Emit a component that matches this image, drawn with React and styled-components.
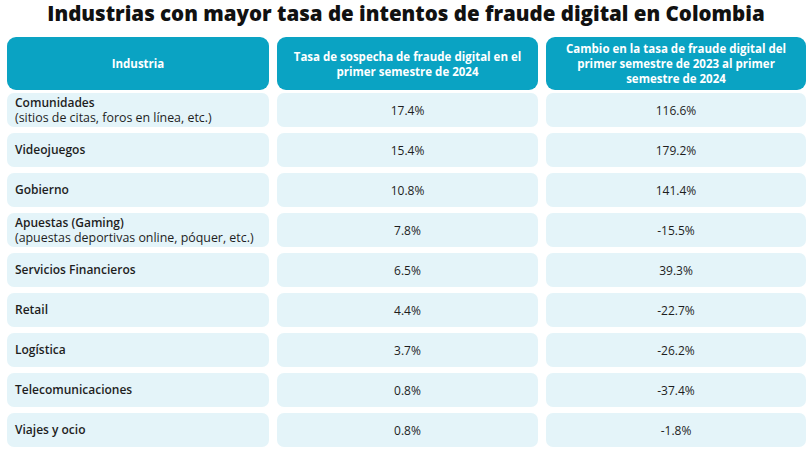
import { Fragment } from 'react'
import styled, { createGlobalStyle } from 'styled-components'

const GlobalStyle = createGlobalStyle`
  html, body {
    margin: 0;
    padding: 0;
    background: #ffffff;
  }
  body {
    font-family: 'Open Sans', 'Noto Sans', sans-serif;
    color: #1e1e1e;
  }
`

const Page = styled.div`
  width: 807px;
  height: 462px;
  box-sizing: border-box;
  padding: 0 2px 0 7px;
  overflow: hidden;
`

const Title = styled.h1`
  margin: 0;
  height: 28px;
  font-family: 'Open Sans', sans-serif;
  font-size: 20.5px;
  font-weight: 800;
  line-height: 26px;
  text-align: center;
  color: #111111;
`

const Columns = styled.div`
  display: grid;
  grid-template-columns: 262px 261px 260px;
  column-gap: 8px;
`

const HeadRow = styled(Columns)`
  margin-top: 9px;
  height: 53px;
`

const Body = styled(Columns)`
  margin-top: 3px;
  row-gap: 6px;
  grid-auto-rows: 34px;
`

const HeadCell = styled.div`
  background: #0aa3c3;
  border-radius: 9px;
  display: flex;
  align-items: center;
  justify-content: center;
  text-align: center;
  padding: 0 14px;
  color: #ffffff;
  font-size: 11.5px;
  font-weight: 700;
  line-height: 15px;
`

const Cell = styled.div`
  background: #e4f4f9;
  border-radius: 7px;
  display: flex;
  flex-direction: column;
  justify-content: center;
  align-items: ${p => (p.$left ? 'flex-start' : 'center')};
  padding: ${p => (p.$left ? '0 8px' : '0')};
  font-size: 12px;
  line-height: 15px;
  color: #1e1e1e;
`

const Name = styled.span`
  font-weight: 600;
  line-height: 14px;
`

const Note = styled.span`
  font-weight: 400;
  font-size: 12.4px;
  line-height: 15px;
`

const rows = [
  ['Comunidades', '(sitios de citas, foros en línea, etc.)', '17.4%', '116.6%'],
  ['Videojuegos', null, '15.4%', '179.2%'],
  ['Gobierno', null, '10.8%', '141.4%'],
  ['Apuestas (Gaming)', '(apuestas deportivas online, póquer, etc.)', '7.8%', '-15.5%'],
  ['Servicios Financieros', null, '6.5%', '39.3%'],
  ['Retail', null, '4.4%', '-22.7%'],
  ['Logística', null, '3.7%', '-26.2%'],
  ['Telecomunicaciones', null, '0.8%', '-37.4%'],
  ['Viajes y ocio', null, '0.8%', '-1.8%'],
]

export default function App() {
  return (
    <Page>
      <GlobalStyle />
      <Title>Industrias con mayor tasa de intentos de fraude digital en Colombia</Title>
      <HeadRow>
        <HeadCell>Industria</HeadCell>
        <HeadCell>Tasa de sospecha de fraude digital en el primer semestre de 2024</HeadCell>
        <HeadCell>Cambio en la tasa de fraude digital del primer semestre de 2023 al primer semestre de 2024</HeadCell>
      </HeadRow>
      <Body>
        {rows.map(([name, note, rate, change]) => (
          <Fragment key={name}>
            <Cell $left>
              <Name>{name}</Name>
              {note && <Note>{note}</Note>}
            </Cell>
            <Cell>{rate}</Cell>
            <Cell>{change}</Cell>
          </Fragment>
        ))}
      </Body>
    </Page>
  )
}
